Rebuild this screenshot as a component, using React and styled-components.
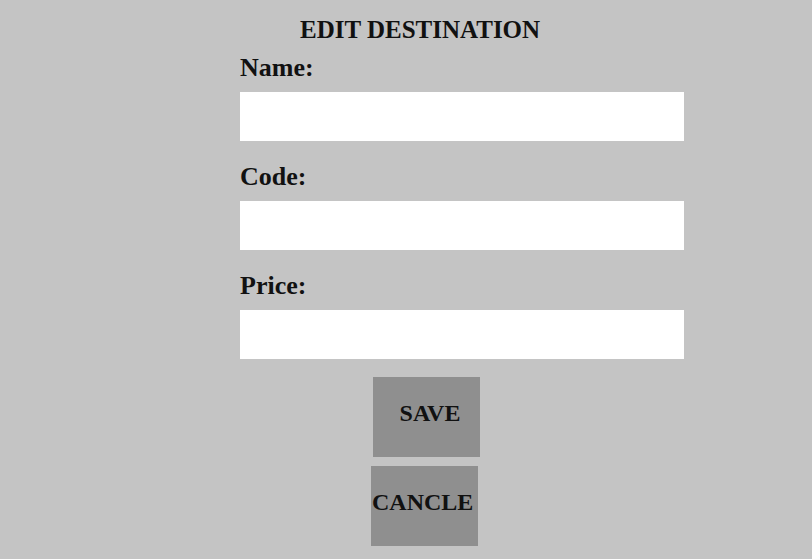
import React from "react";
import styled, { createGlobalStyle } from "styled-components";

const Global = createGlobalStyle`
  html, body { margin: 0; padding: 0; background: #c4c4c4; }
  body { font-family: "Liberation Serif", "Times New Roman", serif; color: #111; }
`;

const Page = styled.div`
  min-height: 559px;
  background: #c4c4c4;
  padding: 15px 0 0 240px;
  box-sizing: border-box;
`;

const Form = styled.form`
  width: 444px;
  display: flex;
  flex-direction: column;
`;

const Title = styled.h2`
  margin: 0 0 8px 0;
  padding-left: 60px;
  font-size: 25px;
  line-height: 30px;
  font-weight: 700;
  letter-spacing: 0;
`;

const Fields = styled.div`
  display: flex;
  flex-direction: column;
  gap: 21px;
`;

const Field = styled.div`
  display: flex;
  flex-direction: column;
  gap: 9px;
`;

const Label = styled.label`
  font-size: 26px;
  line-height: 30px;
  font-weight: 700;
`;

const Input = styled.input`
  height: 49px;
  width: 100%;
  box-sizing: border-box;
  border: none;
  outline: none;
  background: #ffffff;
  margin: 0;
  padding: 0 10px;
  font-family: inherit;
  font-size: 20px;
`;

const Buttons = styled.div`
  display: flex;
  flex-direction: column;
  align-items: flex-start;
  gap: 9px;
  margin-top: 18px;
  padding-left: 133px;
`;

const Button = styled.button`
  width: 107px;
  height: 80px;
  margin-left: ${(p) => p.$shift || 0}px;
  padding: 0 0 8px ${(p) => p.$textOffset || 0}px;
  box-sizing: border-box;
  border: none;
  background: #8f8f8f;
  font-family: "Liberation Serif", "Times New Roman", serif;
  font-weight: 700;
  font-size: 24px;
  color: #111;
  display: flex;
  align-items: center;
  justify-content: ${(p) => (p.$left ? "flex-start" : "center")};
  white-space: nowrap;
  overflow: visible;
  cursor: pointer;
`;

export default function App() {
  return (
    <>
      <Global />
      <Page>
        <Form onSubmit={(e) => e.preventDefault()}>
          <Title>EDIT DESTINATION</Title>
          <Fields>
            <Field>
              <Label htmlFor="name">Name:</Label>
              <Input id="name" type="text" />
            </Field>
            <Field>
              <Label htmlFor="code">Code:</Label>
              <Input id="code" type="text" />
            </Field>
            <Field>
              <Label htmlFor="price">Price:</Label>
              <Input id="price" type="text" />
            </Field>
          </Fields>
          <Buttons>
            <Button type="submit" $textOffset={7}>SAVE</Button>
            <Button type="button" $shift={-2} $left $textOffset={1}>CANCLE</Button>
          </Buttons>
        </Form>
      </Page>
    </>
  );
}
